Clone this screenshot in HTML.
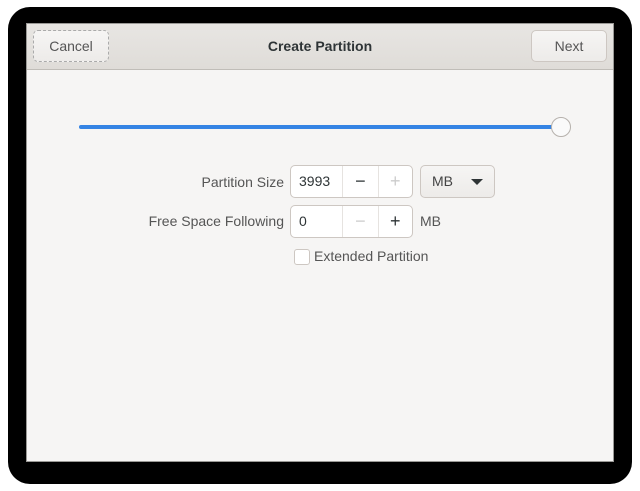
<!DOCTYPE html>
<html><head><style>
*{margin:0;padding:0;box-sizing:border-box}
body{width:640px;height:491px;background:#fff;position:relative;overflow:hidden;font-family:"Liberation Sans","DejaVu Sans",sans-serif;font-size:14px;color:#2e3436}
.frame{position:absolute;left:8px;top:7px;width:624px;height:477px;background:#000;border-radius:22px}
.win{position:absolute;left:26px;top:23px;width:588px;height:439px;background:#f6f5f4;border:1px solid #9a9996}
.hdr{position:absolute;left:0;top:0;width:100%;height:46px;background:linear-gradient(#e8e6e3,#dfdcd8);border-bottom:1px solid #c0bdb8}
.btn{position:absolute;top:6px;width:76px;height:32px;border:1px solid #cdc7c2;border-radius:5px;background:linear-gradient(#f6f5f4,#edebe9);text-align:center;line-height:30px;color:#555}
.title{position:absolute;left:0;width:100%;top:14px;text-align:center;font-weight:bold;color:#2e3436}
.abs{position:absolute}
.lbl{position:absolute;text-align:right;color:#555;width:200px}
.spin{position:absolute;width:123px;height:33px;border:1px solid #cdc7c2;border-radius:5px;background:#fff;display:flex}
.spin div{height:100%;line-height:31px}
.spin .v{width:53px;padding-left:8px;border-right:1px solid #e6e3e0}
.spin .b{width:35px;text-align:center;font-size:18px}
.spin .b+.b{border-left:1px solid #e6e3e0}
</style></head><body>
<div class="frame"></div>
<div class="win">
 <div class="hdr">
  <div class="btn" style="left:6px;border-style:dashed;border-color:#aaa">Cancel</div>
  <div class="title">Create Partition</div>
  <div class="btn" style="left:504px">Next</div>
 </div>
 <div class="abs" style="left:52px;top:101px;width:480px;height:4px;background:#3584e4;border-radius:2px"></div>
 <div class="abs" style="left:524px;top:93px;width:20px;height:20px;border-radius:50%;background:#fafafa;border:1px solid #b6b1ac"></div>
 <div class="lbl" style="left:57px;top:150px">Partition Size</div>
 <div class="spin" style="left:263px;top:141px"><div class="v">3993</div><div class="b" style="color:#2e3436">−</div><div class="b" style="color:#ccc">+</div></div>
 <div class="abs" style="left:393px;top:141px;width:75px;height:33px;border:1px solid #cdc7c2;border-radius:5px;background:linear-gradient(#f6f5f4,#edebe9);line-height:31px;padding-left:11px;color:#444">MB<span style="position:absolute;left:50px;top:13px;border-left:6px solid transparent;border-right:6px solid transparent;border-top:6px solid #2e3436"></span></div>
 <div class="lbl" style="left:57px;top:189px">Free Space Following</div>
 <div class="spin" style="left:263px;top:181px"><div class="v">0</div><div class="b" style="color:#ccc">−</div><div class="b" style="color:#2e3436">+</div></div>
 <div class="abs" style="left:393px;top:189px;color:#555">MB</div>
 <div class="abs" style="left:267px;top:225px;width:16px;height:16px;border:1px solid #cdc7c2;border-radius:3px;background:#fff"></div>
 <div class="abs" style="left:287px;top:224px;color:#555">Extended Partition</div>
</div>
</body></html>
